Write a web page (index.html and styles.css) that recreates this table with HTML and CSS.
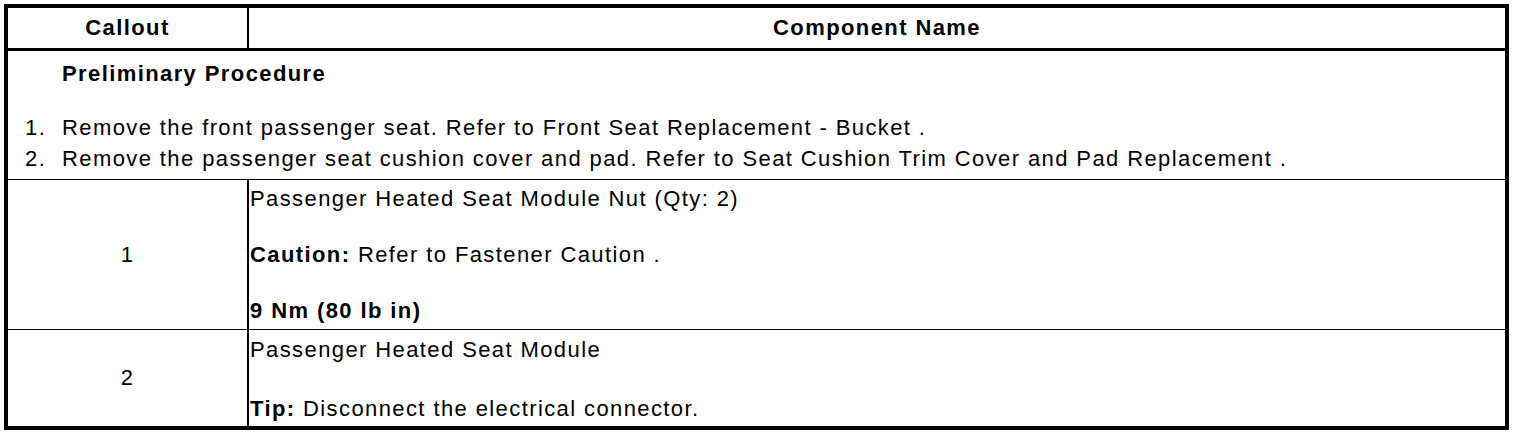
FILE: index.html
```html
<!DOCTYPE html>
<html>
<head>
<meta charset="utf-8">
<link rel="stylesheet" href="styles.css">
</head>
<body>
<table class="proc">
  <thead>
    <tr>
      <th class="col-callout">Callout</th>
      <th class="col-name">Component Name</th>
    </tr>
  </thead>
  <tbody>
    <tr class="prelim-row">
      <td colspan="2" class="prelim">
        <div class="prelim-title">Preliminary Procedure</div>
        <ol class="prelim-list">
          <li>Remove the front passenger seat. Refer to Front Seat Replacement - Bucket .</li>
          <li>Remove the passenger seat cushion cover and pad. Refer to Seat Cushion Trim Cover and Pad Replacement .</li>
        </ol>
      </td>
    </tr>
    <tr class="item-row row-1">
      <td class="callout">1</td>
      <td class="name">
        <p class="line">Passenger Heated Seat Module Nut (Qty: 2)</p>
        <p class="line"><b>Caution:</b> Refer to Fastener Caution .</p>
        <p class="line"><b>9 Nm (80 lb in)</b></p>
      </td>
    </tr>
    <tr class="item-row row-2">
      <td class="callout">2</td>
      <td class="name">
        <p class="line">Passenger Heated Seat Module</p>
        <p class="line"><b>Tip:</b> Disconnect the electrical connector.</p>
      </td>
    </tr>
  </tbody>
</table>
</body>
</html>
```

FILE: styles.css
```css
html, body {
  margin: 0;
  padding: 0;
  background: #fff;
}
body {
  padding: 4px;
  font-family: "Liberation Sans", Arial, sans-serif;
  font-size: 22px;
  letter-spacing: 1.4px;
  color: #000;
}
.proc {
  width: 1505px;
  border-collapse: collapse;
  border: 4px solid #000;
}
.proc th {
  height: 40px;
  padding: 0;
  font-weight: bold;
  text-align: center;
  vertical-align: middle;
  border-bottom: 3px solid #000;
}
.col-callout {
  width: 239px;
  border-right: 2px solid #000;
}
.proc td {
  padding: 0;
}
.proc td.prelim {
  padding: 12px 0 5px 0;
  border-bottom: 1px solid #000;
}
.prelim-title {
  font-weight: bold;
  padding-left: 54px;
  line-height: 22px;
}
.prelim-list {
  margin: 27px 0 0 0;
  padding: 0;
  list-style: none;
  counter-reset: step;
}
.prelim-list li {
  line-height: 31px;
  counter-increment: step;
  display: flex;
}
.prelim-list li::before {
  content: counter(step) ".";
  flex: 0 0 37px;
  padding-left: 17px;
}
.callout {
  text-align: center;
  vertical-align: middle;
  border-right: 2px solid #000;
}
.item-row td {
  border-bottom: 1px solid #000;
}
.row-2 td {
  border-bottom: none;
}
.proc td.name {
  padding: 8px 0 7px 1px;
}
.proc .row-2 td.name {
  padding: 9px 0 6px 1px;
}
.line {
  margin: 0 0 34px 0;
  line-height: 22px;
}
.line:last-child {
  margin-bottom: 0;
}
.row-2 .line {
  margin-bottom: 37px;
}
.row-2 .line:last-child {
  margin-bottom: 0;
}
```
